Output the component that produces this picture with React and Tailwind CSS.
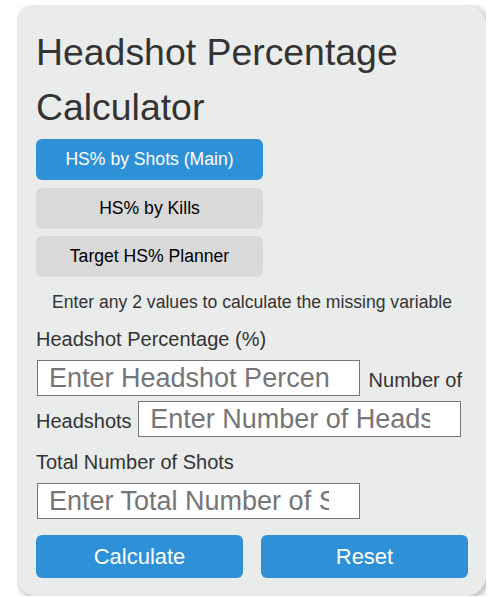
import React from "react";

const tabs = [
  { label: "HS% by Shots (Main)", active: true },
  { label: "HS% by Kills", active: false },
  { label: "Target HS% Planner", active: false },
];

const inputCls =
  "inline-block w-[323px] h-[36px] ml-[1px] mr-[3px] border border-[#767676] bg-white pl-[11px] pr-[30px] text-[27px] leading-normal text-[#333] placeholder:text-[#757575] align-baseline outline-none";

const App = () => {
  return (
    <div
      className="min-h-[597px] bg-white pt-[5px] pl-[17px]"
      style={{ fontFamily: '"Liberation Sans", Arial, sans-serif' }}
    >
      {/* clip the shadow to the card's box, so it only shows in the corners */}
      <div className="w-[469px] overflow-hidden">
        <div className="rounded-[20px] bg-[#eaebeb] pt-[20px] pl-[19px] pr-[18px] pb-[18px] shadow-[2px_2px_8px_rgba(0,0,0,0.35)]">
          <h1 className="text-[37.4px] leading-[54.5px] font-normal text-[#333]">
            Headshot Percentage Calculator
          </h1>

          {/* Tabs */}
          <div className="mt-[5px] flex flex-col gap-[7.5px]">
            {tabs.map((tab) => (
              <button
                key={tab.label}
                className={
                  tab.active
                    ? "w-[227px] h-[41px] rounded-[6px] bg-[#2e91d8] text-[17.6px] text-white"
                    : "w-[227px] h-[41px] rounded-[6px] bg-[#d9d9d9] text-[17.6px] text-black"
                }
              >
                {tab.label}
              </button>
            ))}
          </div>

          <p className="mt-[15px] text-center text-[17.6px] leading-[20px] text-[#333]">
            Enter any 2 values to calculate the missing variable
          </p>

          {/* Fields flow inline, like the original form */}
          <div className="mt-[7px] text-[20px] leading-[41px] text-[#333]">
            Headshot Percentage (%){" "}
            <input className={inputCls} placeholder="Enter Headshot Percentage" />{" "}
            Number of Headshots{" "}
            <input className={inputCls} placeholder="Enter Number of Headshots" />{" "}
            Total Number of Shots{" "}
            <input className={inputCls} placeholder="Enter Total Number of Shots" />
          </div>

          {/* Actions */}
          <div className="mt-[11px] grid grid-cols-2 gap-[18px]">
            <button className="h-[43px] rounded-[6px] bg-[#2e91d8] text-[22px] text-white">
              Calculate
            </button>
            <button className="h-[43px] rounded-[6px] bg-[#2e91d8] text-[22px] text-white">
              Reset
            </button>
          </div>
        </div>
      </div>
    </div>
  );
};

export default App;
